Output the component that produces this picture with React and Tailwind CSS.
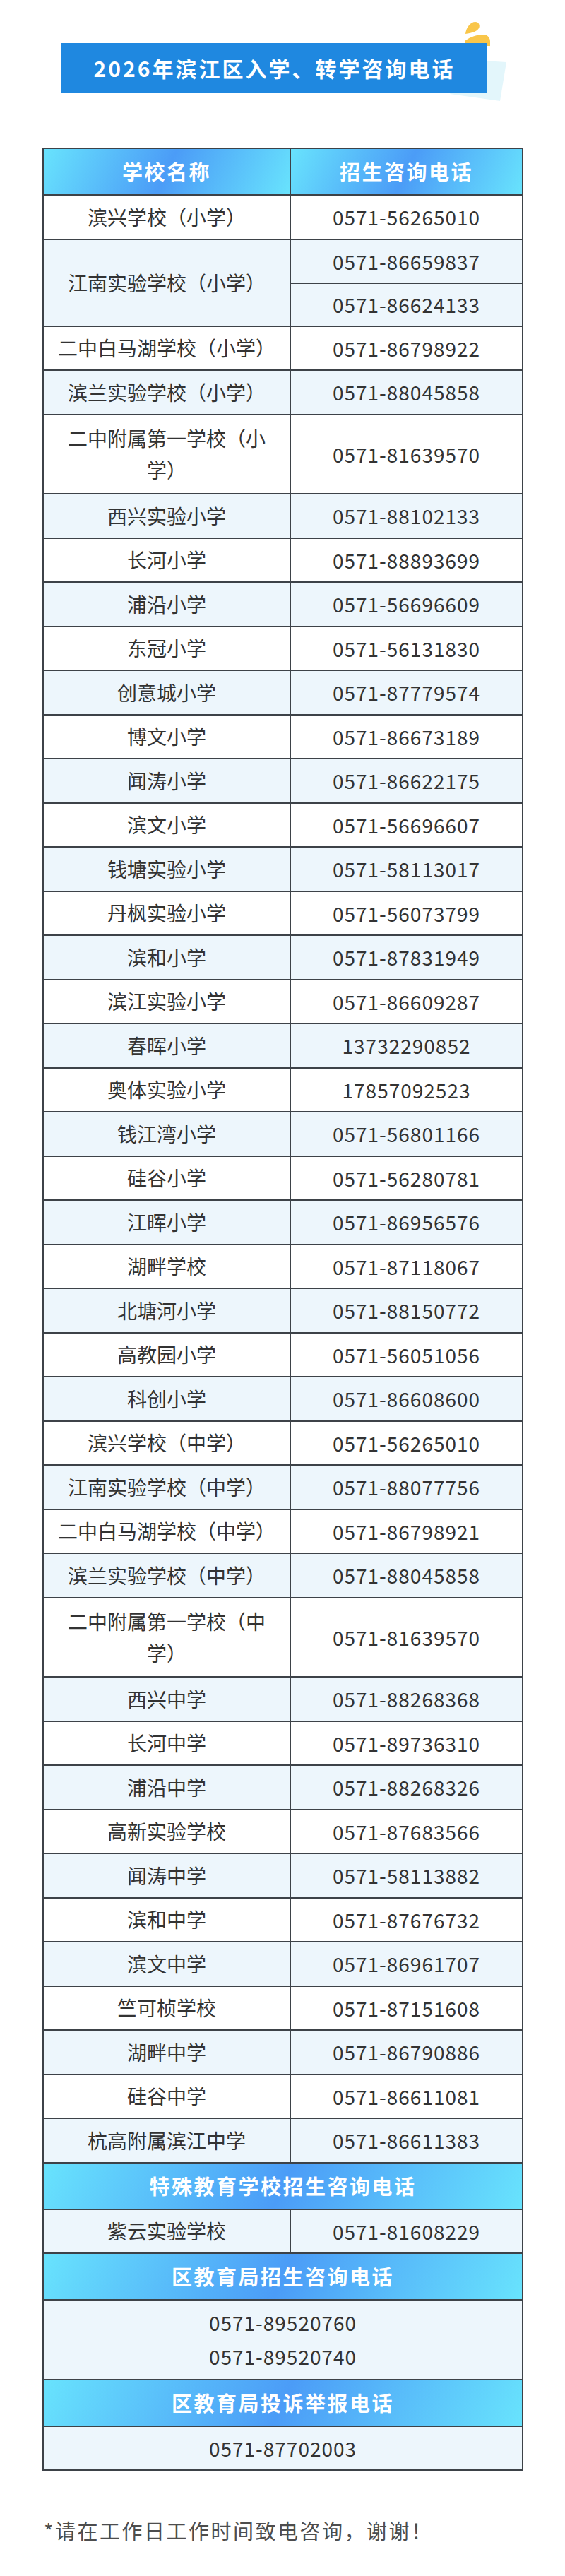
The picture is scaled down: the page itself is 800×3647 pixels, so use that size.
import React from "react";

const primary = [
  ["滨兴学校（小学）", ["0571-56265010"]],
  ["江南实验学校（小学）", ["0571-86659837", "0571-86624133"]],
  ["二中白马湖学校（小学）", ["0571-86798922"]],
  ["滨兰实验学校（小学）", ["0571-88045858"]],
  ["二中附属第一学校（小学）", ["0571-81639570"], true],
  ["西兴实验小学", ["0571-88102133"]],
  ["长河小学", ["0571-88893699"]],
  ["浦沿小学", ["0571-56696609"]],
  ["东冠小学", ["0571-56131830"]],
  ["创意城小学", ["0571-87779574"]],
  ["博文小学", ["0571-86673189"]],
  ["闻涛小学", ["0571-86622175"]],
  ["滨文小学", ["0571-56696607"]],
  ["钱塘实验小学", ["0571-58113017"]],
  ["丹枫实验小学", ["0571-56073799"]],
  ["滨和小学", ["0571-87831949"]],
  ["滨江实验小学", ["0571-86609287"]],
  ["春晖小学", ["13732290852"]],
  ["奥体实验小学", ["17857092523"]],
  ["钱江湾小学", ["0571-56801166"]],
  ["硅谷小学", ["0571-56280781"]],
  ["江晖小学", ["0571-86956576"]],
  ["湖畔学校", ["0571-87118067"]],
  ["北塘河小学", ["0571-88150772"]],
  ["高教园小学", ["0571-56051056"]],
  ["科创小学", ["0571-86608600"]],
  ["滨兴学校（中学）", ["0571-56265010"]],
  ["江南实验学校（中学）", ["0571-88077756"]],
  ["二中白马湖学校（中学）", ["0571-86798921"]],
  ["滨兰实验学校（中学）", ["0571-88045858"]],
  ["二中附属第一学校（中学）", ["0571-81639570"], true],
  ["西兴中学", ["0571-88268368"]],
  ["长河中学", ["0571-89736310"]],
  ["浦沿中学", ["0571-88268326"]],
  ["高新实验学校", ["0571-87683566"]],
  ["闻涛中学", ["0571-58113882"]],
  ["滨和中学", ["0571-87676732"]],
  ["滨文中学", ["0571-86961707"]],
  ["竺可桢学校", ["0571-87151608"]],
  ["湖畔中学", ["0571-86790886"]],
  ["硅谷中学", ["0571-86611081"]],
  ["杭高附属滨江中学", ["0571-86611383"]],
];

const grad =
  "bg-[linear-gradient(115deg,#68e3fd_0%,#4b9cf7_50%,#68e3fd_100%)]";

function SchoolRow({ name, phones, tall, index }) {
  const bg = index % 2 === 0 ? "bg-white" : "bg-[#edf6fc]";
  return (
    <div className={`flex border-t-2 border-[#3d4248] ${bg}`}>
      <div
        className={`flex w-[350px] shrink-0 items-center justify-center border-r-2 border-[#3d4248] px-[14px] text-center text-[28px] leading-[45px] ${
          tall ? "h-[110.5px]" : ""
        }`}
      >
        {name}
      </div>
      <div className="flex flex-1 flex-col">
        {phones.map((p, i) => (
          <div
            key={p}
            className={`flex items-center justify-center text-[28px] tracking-[1px] ${
              tall ? "h-[110.5px]" : "h-[60.5px]"
            } ${i > 0 ? "border-t-2 border-[#3d4248]" : ""}`}
          >
            {p}
          </div>
        ))}
      </div>
    </div>
  );
}

function SectionHead({ children }) {
  return (
    <div
      className={`flex h-[66px] items-center justify-center border-t-2 border-[#3d4248] text-[29px] font-bold tracking-[2.5px] text-white ${grad}`}
    >
      {children}
    </div>
  );
}

export default function App() {
  return (
    <div className="min-h-[3647px] bg-white pt-[61px] pb-[43px] font-['Noto_Sans_CJK_SC',sans-serif] text-[#333]">
      {/* title banner */}
      <div className="relative ml-[87px] w-[603px]">
        <svg
          className="absolute left-[543px] top-[-36px] h-[125px] w-[100px]"
          viewBox="0 0 100 125"
        >
          <path d="M40 60 L87 63 L78 118 L7 108 Z" fill="#e3f6fb" />
          <path
            d="M29 23 C30 14 36 6 43 6 C48 6 50 11 48 15 C45 20 37 22 29 23 Z"
            fill="#f9c64a"
          />
          <path
            d="M28 33 C36 27 46 24 54 24 C60 24 64 28 64 34 L64 40 L30 40 Z"
            fill="#f9c64a"
          />
        </svg>
        <div className="relative flex h-[71px] items-center justify-center bg-[#1f88e0] text-[30px] font-bold tracking-[3px] text-white">
          2026年滨江区入学、转学咨询电话
        </div>
      </div>

      {/* table */}
      <div className="ml-[60px] mt-[77px] w-[681px] border-2 border-[#3d4248]">
        <div className="flex h-[64px] text-[29px] font-bold tracking-[2.5px] text-white">
          <div
            className={`flex w-[350px] shrink-0 items-center justify-center border-r-2 border-[#3d4248] ${grad}`}
          >
            学校名称
          </div>
          <div className={`flex flex-1 items-center justify-center ${grad}`}>
            招生咨询电话
          </div>
        </div>

        {primary.map(([name, phones, tall], i) => (
          <SchoolRow key={name} name={name} phones={phones} tall={tall} index={i} />
        ))}

        <SectionHead>特殊教育学校招生咨询电话</SectionHead>
        <SchoolRow name="紫云实验学校" phones={["0571-81608229"]} index={1} />

        <SectionHead>区教育局招生咨询电话</SectionHead>
        <div className="flex h-[112.5px] flex-col items-center justify-center border-t-2 border-[#3d4248] bg-[#edf6fc] text-[28px] leading-[48px] tracking-[1px]">
          <span>0571-89520760</span>
          <span>0571-89520740</span>
        </div>

        <SectionHead>区教育局投诉举报电话</SectionHead>
        <div className="flex h-[62px] items-center justify-center border-t-2 border-[#3d4248] bg-[#edf6fc] text-[28px] tracking-[1px]">
          0571-87702003
        </div>
      </div>

      <p className="ml-[62px] mt-[64px] text-[29px] leading-[40px] tracking-[2.5px] text-[#4d4d4d]">
        *请在工作日工作时间致电咨询，谢谢！
      </p>
    </div>
  );
}
